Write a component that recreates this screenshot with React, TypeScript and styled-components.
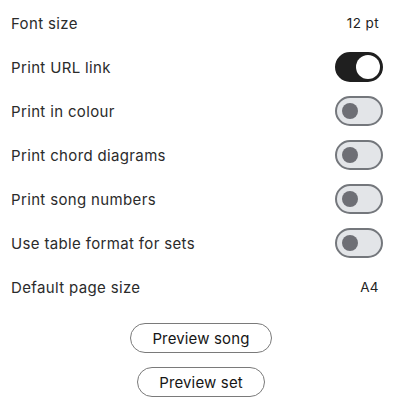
import React, { useState } from "react";
import styled, { createGlobalStyle } from "styled-components";

const Global = createGlobalStyle`
  html, body { margin: 0; padding: 0; background: #ffffff; }
  body { font-family: Inter, "Noto Sans", sans-serif; -webkit-font-smoothing: antialiased; }
`;

const Page = styled.div`
  width: 400px;
  padding: 1px 17px 0 11px;
  box-sizing: border-box;
  display: flex;
  flex-direction: column;
`;

const Row = styled.div`
  height: 44px;
  display: flex;
  align-items: center;
  justify-content: space-between;
`;

const Label = styled.span`
  font-size: 15px;
  color: #2b2b2b;
  letter-spacing: 0.35px;
`;

const Value = styled.span`
  font-size: 13.5px;
  color: #222;
  letter-spacing: 0.4px;
  margin-right: 4px;
`;

const Track = styled.button<{ $on: boolean }>`
  width: 48px;
  height: 30px;
  box-sizing: border-box;
  border-radius: 15px;
  border: 2px solid ${(p) => (p.$on ? "#1f1f1f" : "#74777c")};
  background: ${(p) => (p.$on ? "#1f1f1f" : "#e3e5e8")};
  padding: 0;
  display: flex;
  align-items: center;
  justify-content: ${(p) => (p.$on ? "flex-end" : "flex-start")};
  cursor: pointer;
`;

const Thumb = styled.span<{ $on: boolean }>`
  width: ${(p) => (p.$on ? 24 : 16)}px;
  height: ${(p) => (p.$on ? 24 : 16)}px;
  border-radius: 50%;
  background: ${(p) => (p.$on ? "#ffffff" : "#6e6f75")};
  margin: ${(p) => (p.$on ? "0 1px 0 0" : "0 0 0 5px")};
`;

const Buttons = styled.div`
  display: flex;
  flex-direction: column;
  align-items: center;
  gap: 14px;
  margin-top: 14px;
  padding-left: 8px;
`;

const Pill = styled.button`
  height: 30px;
  box-sizing: border-box;
  border: 1px solid #7a7a7a;
  border-radius: 15px;
  background: #fff;
  font-family: Inter, "Noto Sans", sans-serif;
  font-size: 15px;
  font-weight: 400;
  letter-spacing: 0.15px;
  color: #161616;
  padding: 0 21px;
  cursor: pointer;
`;

const Toggle: React.FC<{ initial: boolean }> = ({ initial }) => {
  const [on, setOn] = useState(initial);
  return (
    <Track $on={on} onClick={() => setOn(!on)} aria-pressed={on}>
      <Thumb $on={on} />
    </Track>
  );
};

const toggles: [string, boolean][] = [
  ["Print URL link", true],
  ["Print in colour", false],
  ["Print chord diagrams", false],
  ["Print song numbers", false],
  ["Use table format for sets", false],
];

export default function App() {
  return (
    <Page>
      <Global />
      <Row>
        <Label>Font size</Label>
        <Value>12 pt</Value>
      </Row>
      {toggles.map(([l, v]) => (
        <Row key={l}>
          <Label>{l}</Label>
          <Toggle initial={v} />
        </Row>
      ))}
      <Row>
        <Label>Default page size</Label>
        <Value>A4</Value>
      </Row>
      <Buttons>
        <Pill>Preview song</Pill>
        <Pill>Preview set</Pill>
      </Buttons>
    </Page>
  );
}
